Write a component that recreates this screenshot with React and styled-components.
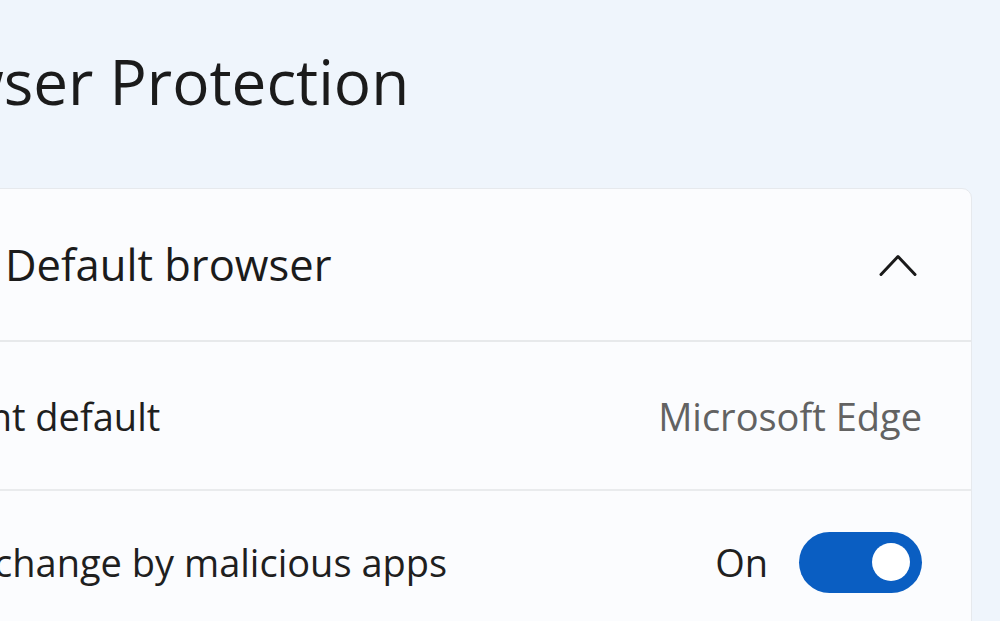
import React from "react";
import styled, { createGlobalStyle } from "styled-components";

const Global = createGlobalStyle`
  html, body { margin: 0; padding: 0; }
  body {
    background: #eff5fc;
    font-family: "Open Sans", "Noto Sans", "Liberation Sans", sans-serif;
    color: #1b1b1b;
  }
`;

const Page = styled.div`
  width: 1000px;
  height: 621px;
  overflow: hidden;
  background: #eff5fc;
`;

/* the screenshot shows only the right part of the settings page,
   so the content column starts left of the visible window */
const Column = styled.div`
  margin-left: -160px;
  width: calc(100% + 160px - 28px);
  padding-top: 41px;
  display: flex;
  flex-direction: column;
`;

const Title = styled.h1`
  margin: 0 0 67px 13px;
  font-size: 62px;
  line-height: 80px;
  font-weight: 400;
  white-space: nowrap;
  color: #1b1b1b;
`;

const Card = styled.section`
  background: #fbfcfe;
  border: 1px solid #e6e9ed;
  border-radius: 10px;
  display: flex;
  flex-direction: column;
`;

const Header = styled.div`
  height: 151px;
  display: flex;
  align-items: center;
  justify-content: space-between;
  padding: 0 54px 0 164px;
  border-bottom: 2px solid #e7e9eb;
`;

const HeaderText = styled.span`
  font-size: 43.5px;
  white-space: nowrap;
  color: #1b1b1b;
`;

const Row = styled.div`
  height: ${(p) => p.$h}px;
  display: flex;
  align-items: center;
  justify-content: space-between;
  padding: 0 49px 0 48px;
  border-bottom: ${(p) => (p.$last ? "none" : "2px solid #e9ebed")};
  flex-shrink: 0;
`;

const Label = styled.span`
  font-size: 38px;
  white-space: nowrap;
  color: #1f1f1f;
`;

const Value = styled.span`
  font-size: 38px;
  white-space: nowrap;
  color: #626262;
`;

const ToggleGroup = styled.div`
  display: flex;
  align-items: center;
  gap: 31px;
`;

const ToggleText = styled.span`
  font-size: 38px;
  color: #1f1f1f;
`;

const Toggle = styled.div`
  width: 123px;
  height: 61px;
  border-radius: 31px;
  background: #0a5ec2;
  display: flex;
  align-items: center;
  justify-content: ${(p) => (p.$on ? "flex-end" : "flex-start")};
  padding: 0 12px;
  box-sizing: border-box;
`;

const Knob = styled.div`
  width: 38px;
  height: 38px;
  border-radius: 50%;
  background: #ffffff;
`;

const Chevron = () => (
  <svg width="38" height="24" viewBox="0 0 38 24" aria-hidden="true">
    <polyline
      points="2,21.5 19,3.5 36,21.5"
      fill="none"
      stroke="#1a1a1a"
      strokeWidth="3"
      strokeLinecap="round"
      strokeLinejoin="round"
    />
  </svg>
);

export default function App() {
  return (
    <>
      <Global />
      <Page>
        <Column>
          <Title>Browser Protection</Title>
          <Card>
            <Header>
              <HeaderText>Default browser</HeaderText>
              <Chevron />
            </Header>
            <Row $h={147}>
              <Label>Current default</Label>
              <Value>Microsoft Edge</Value>
            </Row>
            <Row $h={142} $last>
              <Label>Block change by malicious apps</Label>
              <ToggleGroup>
                <ToggleText>On</ToggleText>
                <Toggle $on>
                  <Knob />
                </Toggle>
              </ToggleGroup>
            </Row>
          </Card>
        </Column>
      </Page>
    </>
  );
}
